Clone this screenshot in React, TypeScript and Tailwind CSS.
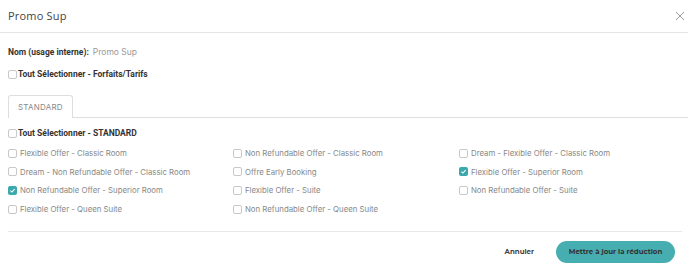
import React from "react";

const items: [string, boolean][] = [
  ["Flexible Offer - Classic Room", false],
  ["Non Refundable Offer - Classic Room", false],
  ["Dream - Flexible Offer - Classic Room", false],
  ["Dream - Non Refundable Offer - Classic Room", false],
  ["Offre Early Booking", false],
  ["Flexible Offer - Superior Room", true],
  ["Non Refundable Offer - Superior Room", true],
  ["Flexible Offer - Suite", false],
  ["Non Refundable Offer - Suite", false],
  ["Flexible Offer - Queen Suite", false],
  ["Non Refundable Offer - Queen Suite", false],
];

const Box = ({ checked }: { checked?: boolean }) =>
  checked ? (
    <span className="w-[9px] h-[9px] rounded-[2px] bg-[#3aa9ae] flex items-center justify-center shrink-0">
      <svg width="7" height="7" viewBox="0 0 10 10">
        <path d="M2 5.2 L4.2 7.2 L8 3" fill="none" stroke="white" strokeWidth="1.6" />
      </svg>
    </span>
  ) : (
    <span className="w-[9px] h-[9px] rounded-[2px] border border-[#c8c8c8] bg-white shrink-0" />
  );

const App = () => {
  return (
    <div className="w-[688px] h-[279px] bg-white text-[#333]" style={{ fontFamily: "Inter, 'Open Sans', sans-serif" }}>
      {/* header */}
      <div className="h-[33px] border-b border-[#e6e6e6] flex items-center justify-between pl-2 pr-[2px]">
        <span className="text-[11px] text-[#444] tracking-[0.2px]" style={{ fontFamily: "'Open Sans', sans-serif" }}>Promo Sup</span>
        <svg width="12" height="12" viewBox="0 0 12 12">
          <path d="M2 2 L10 10 M10 2 L2 10" stroke="#999" strokeWidth="1" />
        </svg>
      </div>

      <div className="px-2">
        <div className="mt-[13px] flex items-center gap-[4px] text-[8.5px] leading-[12px]">
          <span className="font-bold text-[#333]" style={{ fontFamily: "Roboto, sans-serif" }}>Nom (usage interne):</span>
          <span className="text-[#999]">Promo Sup</span>
        </div>

        <div className="mt-[10px] flex items-center gap-[1px] text-[8.5px] leading-[12px] font-bold" style={{ fontFamily: "Roboto, sans-serif" }}>
          <Box />
          <span>Tout Sélectionner - Forfaits/Tarifs</span>
        </div>

        {/* tabs */}
        <div className="mt-[15px] flex">
          <div className="h-[23px] px-[9px] border border-b-0 border-[#dedede] rounded-t-[3px] flex items-center text-[8px] text-[#888] tracking-[0.2px]">
            STANDARD
          </div>
          <div className="flex-1 border-b border-[#dedede] -mr-2" />
        </div>

        <div className="mt-[9px] flex items-center gap-[1px] text-[8.5px] leading-[12px] font-bold" style={{ fontFamily: "Roboto, sans-serif" }}>
          <Box />
          <span>Tout Sélectionner - STANDARD</span>
        </div>

        <div className="mt-[8px] grid grid-cols-[225px_226px_1fr] gap-y-[6.7px]">
          {items.map(([label, checked]) => (
            <div key={label} className="flex items-center gap-[3px] text-[7.8px] leading-[12px] text-[#888]">
              <Box checked={checked} />
              <span>{label}</span>
            </div>
          ))}
        </div>

        <div className="mt-[16px] border-t border-[#e8e8e8] mr-[-2px]" />

        <div className="mt-[9px] flex items-center justify-end gap-[22px] pr-[5px]" style={{ fontFamily: "Montserrat, Inter, sans-serif" }}>
          <span className="text-[7px] font-bold text-[#444]">Annuler</span>
          <button className="w-[119px] h-[22px] rounded-full bg-[#46aeb0] text-[7px] font-bold text-[#333]">
            Mettre à jour la réduction
          </button>
        </div>
      </div>
    </div>
  );
};

export default App;
